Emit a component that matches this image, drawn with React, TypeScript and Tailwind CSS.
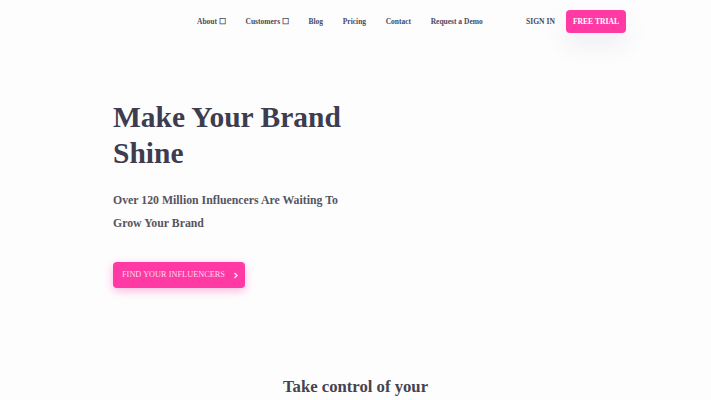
export default function App() {
  const serif = { fontFamily: '"Liberation Serif", "Times New Roman", serif' };
  const navItems = ["About ☐", "Customers ☐", "Blog", "Pricing", "Contact", "Request a Demo"];

  return (
    <div className="min-h-screen w-[711px] bg-[#fdfdfe] text-[#3d3d4f] overflow-hidden" style={serif}>
      <header className="flex items-center h-[43px] pl-[197px] pr-[85px]">
        <nav className="flex items-center gap-[19.6px] text-[7.5px] font-bold text-[#4a4a5a]">
          {navItems.map((item) => (
            <a key={item} className="whitespace-nowrap">
              {item}
            </a>
          ))}
        </nav>
        <div className="ml-auto flex items-center gap-[11px]">
          <a className="text-[7.6px] font-bold text-[#4a4a5a]">SIGN IN</a>
          <button className="h-[23px] px-[7px] rounded-[4px] bg-[#ff3aa5] text-white text-[7.6px] font-bold shadow-[0_12px_24px_rgba(60,60,90,0.08)]">
            FREE TRIAL
          </button>
        </div>
      </header>

      <section className="pl-[113px] pt-[56px]">
        <h1 className="text-[29.5px] leading-[36px] font-bold text-[#3d3d4f]">
          Make Your Brand
          <br />
          Shine
        </h1>
        <p className="mt-[18px] text-[11.8px] leading-[23px] font-bold text-[#55555f]">
          Over 120 Million Influencers Are Waiting To
          <br />
          Grow Your Brand
        </p>
        <button className="mt-[27px] flex items-center gap-[8px] h-[26px] w-[132px] pl-[9px] rounded-[4px] bg-[#ff3aa5] text-[#ffd6ec] text-[8.3px] shadow-[0_3px_10px_rgba(255,58,165,0.35)]">
          FIND YOUR INFLUENCERS
          <svg width="6" height="7" viewBox="0 0 6 7" fill="none" stroke="#ffe3f2" strokeWidth="1.4">
            <path d="M1.5 1 L4 3.5 L1.5 6" />
          </svg>
        </button>
      </section>

      <section className="mt-[86px] text-center">
        <h2 className="text-[16.7px] font-bold text-[#44444f]">Take control of your</h2>
      </section>
    </div>
  );
}
